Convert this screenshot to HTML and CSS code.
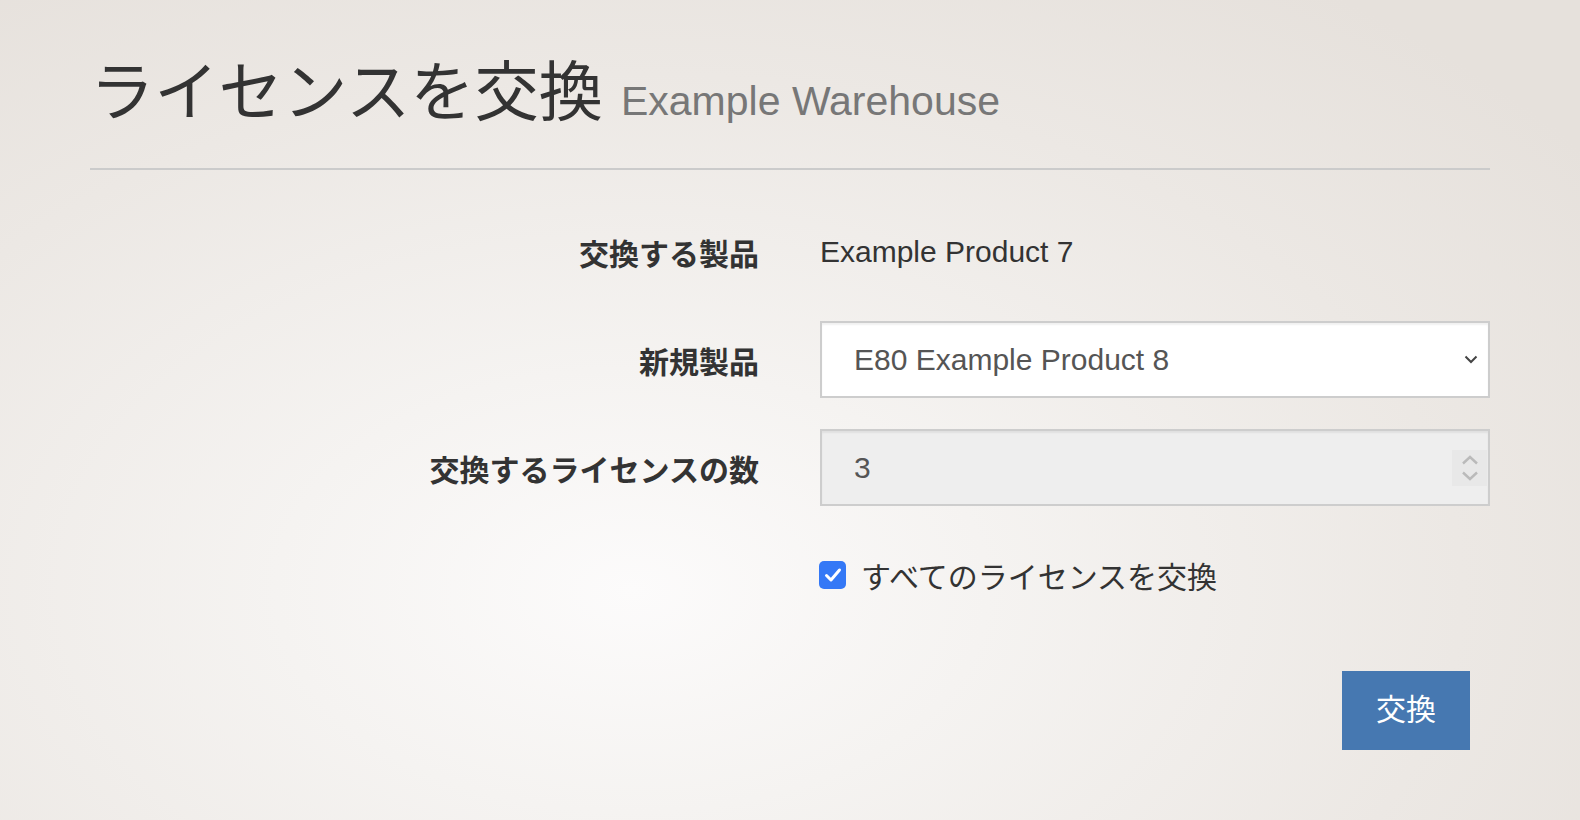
FILE: index.html
```html
<!DOCTYPE html>
<html lang="ja">
<head>
<meta charset="utf-8">
<title>ライセンスを交換</title>
<link rel="stylesheet" href="styles.css">
</head>
<body>
<div class="page">
  <h1 class="title">ライセンスを交換 <small class="subtitle">Example Warehouse</small></h1>
  <hr class="divider">
  <form class="form">
    <div class="row row-static">
      <div class="label">交換する製品</div>
      <div class="value">Example Product 7</div>
    </div>
    <div class="row row-select">
      <div class="label">新規製品</div>
      <div class="field select-field">
        <span>E80 Example Product 8</span>
        <svg class="chevron" width="14" height="9" viewBox="0 0 14 9"><path d="M1.5 1.5 L7 7 L12.5 1.5" fill="none" stroke="#444" stroke-width="2"/></svg>
      </div>
    </div>
    <div class="row row-number">
      <div class="label">交換するライセンスの数</div>
      <div class="field number-field">
        <span>3</span>
        <span class="spinner">
          <svg width="18" height="32" viewBox="0 0 18 32"><path d="M2 11.5 L9 5 L16 11.5" fill="none" stroke="#bababa" stroke-width="2.4"/><path d="M2 20.5 L9 27 L16 20.5" fill="none" stroke="#bababa" stroke-width="2.4"/></svg>
        </span>
      </div>
    </div>
    <div class="row row-check">
      <div></div>
      <label class="check">
        <span class="box"><svg width="18" height="16" viewBox="0 0 18 16"><path d="M2.5 8.5 L7 13 L15.5 3" fill="none" stroke="#fff" stroke-width="3" stroke-linecap="round" stroke-linejoin="round"/></svg></span>
        <span class="check-text">すべてのライセンスを交換</span>
      </label>
    </div>
    <div class="actions">
      <button type="button" class="btn">交換</button>
    </div>
  </form>
</div>
</body>
</html>
```
FILE: styles.css
```css
html, body {
  margin: 0;
  padding: 0;
  height: 100%;
}
body {
  font-family: "Liberation Sans", "Noto Sans CJK JP", sans-serif;
  color: #333;
  background: radial-gradient(ellipse 75% 90% at 40% 72%, #fcfbfb 0%, #f5f3f1 30%, #ece8e4 70%, #e6e1dc 100%);
  min-height: 820px;
}
.page {
  width: 1400px;
  margin-left: 90px;
  padding-top: 55px;
}
.title {
  margin: 0;
  font-size: 64.3px;
  line-height: 76px;
  font-weight: normal;
  color: #333;
}
.subtitle {
  font-size: 41px;
  color: #777;
}
.divider {
  margin: 29px 0 0 0;
  border: 0;
  border-top: 2px solid #cbcbcb;
  height: 0;
}
.form {
  display: flex;
  flex-direction: column;
  margin-top: 52px;
}
.row {
  display: grid;
  grid-template-columns: 1fr 670px;
  column-gap: 60px;
  align-items: center;
  font-size: 30px;
}
.label {
  text-align: right;
  font-weight: bold;
  padding-right: 1px;
}
.row-static {
  height: 60px;
  margin-bottom: 39px;
}
.row-select {
  margin-bottom: 31px;
}
.field {
  box-sizing: border-box;
  height: 77px;
  border: 2px solid #cdcdcd;
  display: flex;
  align-items: center;
  justify-content: space-between;
  padding-left: 32px;
  color: #555;
  box-shadow: inset 0 2px 2px rgba(0, 0, 0, 0.06);
}
.select-field {
  background: #fff;
  padding-right: 10px;
}
.number-field {
  background: #eee;
  padding-right: 1px;
}
.spinner {
  width: 35px;
  height: 36px;
  background: #e8e8e8;
  display: flex;
  align-items: center;
  justify-content: center;
}
.row-check {
  height: 30px;
  margin-top: 47px;
}
.check {
  display: flex;
  align-items: center;
  gap: 15px;
  font-weight: normal;
}
.box {
  width: 27px;
  height: 28px;
  border-radius: 5px;
  background: #3478f6;
  display: flex;
  align-items: center;
  justify-content: center;
  margin-left: -1px;
}
.check-text {
  color: #333;
}
.actions {
  display: flex;
  justify-content: flex-end;
  margin-top: 88px;
  padding-right: 20px;
}
.btn {
  width: 128px;
  height: 79px;
  border: 0;
  background: #4678b1;
  color: #fff;
  font-family: "Liberation Sans", "Noto Sans CJK JP", sans-serif;
  font-size: 30px;
  padding: 0 0 7px 0;
}
```
